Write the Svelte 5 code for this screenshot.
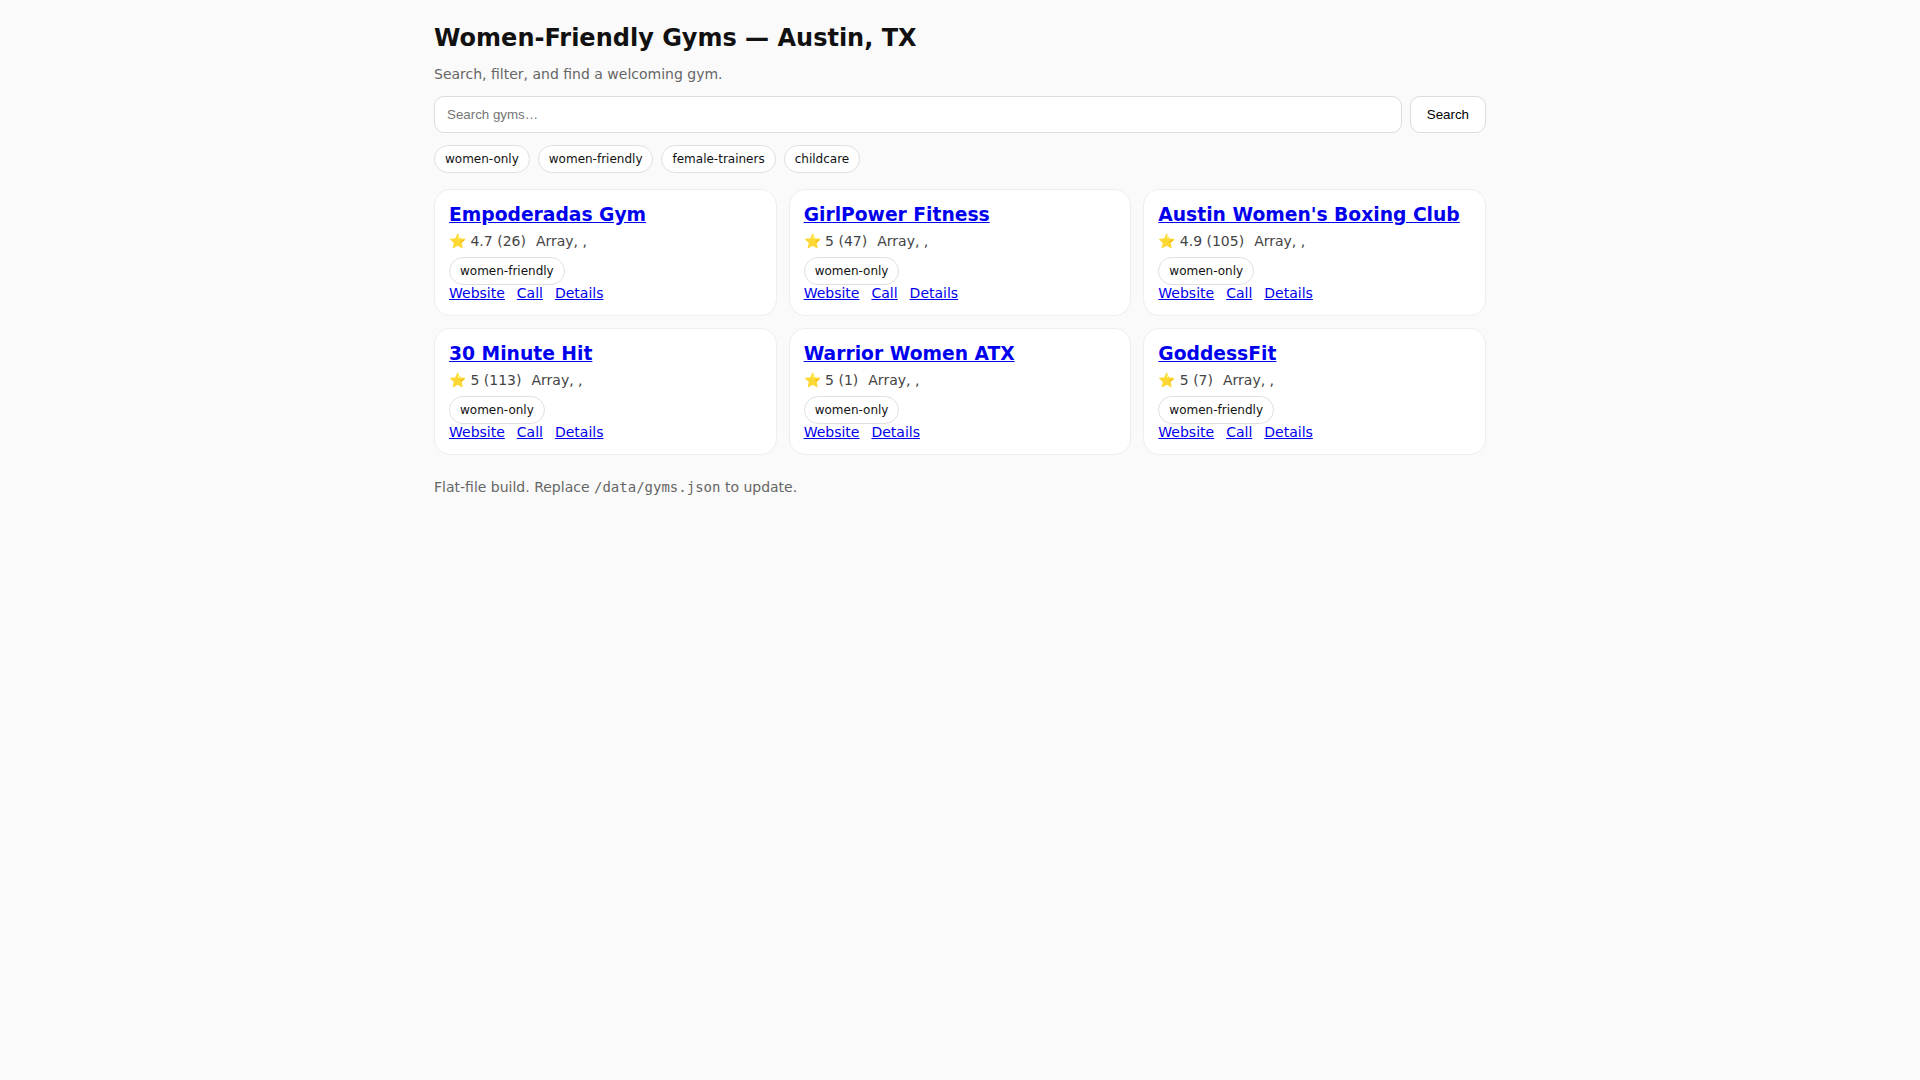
<script>
  let query = $state("");
  let active = $state([]);

  const tags = ["women-only", "women-friendly", "female-trainers", "childcare"];

  const gyms = [
    { name: "Empoderadas Gym", rating: 4.7, reviews: 26, tag: "women-friendly", links: ["Website", "Call", "Details"] },
    { name: "GirlPower Fitness", rating: 5, reviews: 47, tag: "women-only", links: ["Website", "Call", "Details"] },
    { name: "Austin Women's Boxing Club", rating: 4.9, reviews: 105, tag: "women-only", links: ["Website", "Call", "Details"] },
    { name: "30 Minute Hit", rating: 5, reviews: 113, tag: "women-only", links: ["Website", "Call", "Details"] },
    { name: "Warrior Women ATX", rating: 5, reviews: 1, tag: "women-only", links: ["Website", "Details"] },
    { name: "GoddessFit", rating: 5, reviews: 7, tag: "women-friendly", links: ["Website", "Call", "Details"] },
  ];

  const shown = $derived(
    gyms.filter(
      (g) => g.name.toLowerCase().includes(query.trim().toLowerCase()) && (!active.length || active.includes(g.tag)),
    ),
  );

  function toggle(tag) {
    active = active.includes(tag) ? active.filter((t) => t !== tag) : [...active, tag];
  }
</script>

<div class="container">
  <header>
    <h1>Women-Friendly Gyms — Austin, TX</h1>
    <p class="sub">Search, filter, and find a welcoming gym.</p>
  </header>

  <form class="search" onsubmit={(ev) => ev.preventDefault()}>
    <input type="search" placeholder="Search gyms…" aria-label="Search gyms" bind:value={query} />
    <button type="submit">Search</button>
  </form>

  <div class="filters">
    {#each tags as tag (tag)}
      <button type="button" class="badge" class:on={active.includes(tag)} aria-pressed={active.includes(tag)} onclick={() => toggle(tag)}>{tag}</button>
    {/each}
  </div>

  <main class="grid">
    {#each shown as g (g.name)}
      <article class="card">
        <h3><a href="#details">{g.name}</a></h3>
        <div class="meta">
          <span>⭐ {g.rating} ({g.reviews})</span>
          <span>Array, ,</span>
        </div>
        <div class="tags"><span class="badge">{g.tag}</span></div>
        <div class="links">
          {#each g.links as link (link)}
            <a href="#{link.toLowerCase()}">{link}</a>
          {/each}
        </div>
      </article>
    {/each}
  </main>

  <footer>Flat-file build. Replace <code>/data/gyms.json</code> to update.</footer>
</div>

<style>
  :global(body) {
    margin: 0;
    background: #fafafa;
  }
  .container {
    box-sizing: border-box;
    max-width: 1100px;
    margin: 0 auto;
    padding: 24px;
    color: #111;
    font-family: "DejaVu Sans", sans-serif;
    font-size: 16px;
  }
  h1 {
    margin: 0 0 12px;
    font-size: 24px;
    line-height: 28px;
  }
  .sub {
    margin: 0 0 12px;
    color: #666;
    font-size: 14px;
    line-height: 20px;
  }
  .search {
    display: flex;
    gap: 8px;
    margin-bottom: 12px;
  }
  .search input,
  .search button {
    box-sizing: border-box;
    height: 37px;
    border: 1px solid #ddd;
    border-radius: 10px;
    background: #fff;
    font-family: "Liberation Sans", sans-serif;
  }
  .search input {
    flex: 1;
    min-width: 0;
    padding: 0 12px;
    appearance: none;
  }
  .search button {
    padding: 0 16px;
    color: #000;
    cursor: pointer;
  }
  .filters {
    display: flex;
    flex-wrap: wrap;
    gap: 8px;
    margin-bottom: 16px;
  }
  .badge {
    padding: 6px 10px;
    border: 1px solid #e0e0e0;
    border-radius: 999px;
    background: #fff;
    color: #111;
    font: 12px / 14px "DejaVu Sans", sans-serif;
  }
  button.badge {
    cursor: pointer;
  }
  .badge.on {
    background: #111;
    color: #fff;
  }
  .grid {
    display: grid;
    grid-template-columns: repeat(auto-fill, minmax(260px, 1fr));
    gap: 12px;
  }
  .card {
    padding: 14px;
    border: 1px solid #eee;
    border-radius: 16px;
    background: #fff;
  }
  h3 {
    margin: 0 0 6px;
    line-height: 22px;
  }
  a {
    color: #0000ee;
  }
  .meta {
    display: flex;
    gap: 10px;
    margin-bottom: 6px;
    color: #444;
    font-size: 14px;
    line-height: 19px;
  }
  .tags {
    display: flex;
  }
  .links {
    display: flex;
    gap: 12px;
    font-size: 14px;
    line-height: 16px;
  }
  footer {
    margin-top: 24px;
    color: #666;
    font-size: 14px;
    line-height: 17px;
  }
  code {
    font-family: "DejaVu Sans Mono", monospace;
  }
</style>
